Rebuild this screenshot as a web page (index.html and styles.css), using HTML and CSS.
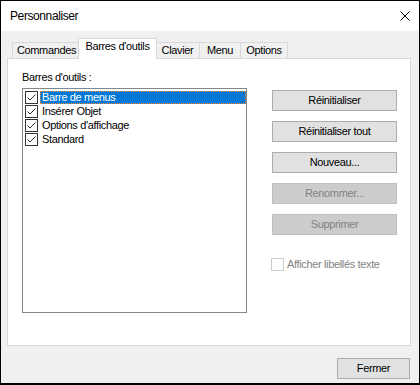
FILE: index.html
```html
<!DOCTYPE html>
<html lang="fr">
<head>
<meta charset="utf-8">
<title>Personnaliser</title>
<link rel="stylesheet" href="styles.css">
</head>
<body>
<div class="window">
  <div class="titlebar">
    <span class="title">Personnaliser</span>
    <svg class="close" width="10" height="10" viewBox="0 0 10 10"><path d="M0.5 0.5 L9.5 9.5 M9.5 0.5 L0.5 9.5" stroke="#000" stroke-width="1" fill="none"/></svg>
  </div>
  <div class="tabs">
    <div class="tab tab-cmd">Commandes</div>
    <div class="tab tab-bar active">Barres d'outils</div>
    <div class="tab tab-clav">Clavier</div>
    <div class="tab tab-menu">Menu</div>
    <div class="tab tab-opt last">Options</div>
  </div>
  <div class="panel">
    <div class="leftcol">
      <div class="label">Barres d'outils :</div>
      <div class="listbox">
        <div class="item selected">
          <svg class="cb" width="13" height="13" viewBox="0 0 13 13"><rect x="0.5" y="0.5" width="12" height="12" fill="#fff" stroke="#333"/><path d="M2.5 6.5 L5 9 L10.5 3.5" stroke="#333" fill="none"/></svg>
          <span class="txt">Barre de menus</span>
        </div>
        <div class="item">
          <svg class="cb" width="13" height="13" viewBox="0 0 13 13"><rect x="0.5" y="0.5" width="12" height="12" fill="#fff" stroke="#333"/><path d="M2.5 6.5 L5 9 L10.5 3.5" stroke="#333" fill="none"/></svg>
          <span class="txt">Insérer Objet</span>
        </div>
        <div class="item">
          <svg class="cb" width="13" height="13" viewBox="0 0 13 13"><rect x="0.5" y="0.5" width="12" height="12" fill="#fff" stroke="#333"/><path d="M2.5 6.5 L5 9 L10.5 3.5" stroke="#333" fill="none"/></svg>
          <span class="txt">Options d'affichage</span>
        </div>
        <div class="item">
          <svg class="cb" width="13" height="13" viewBox="0 0 13 13"><rect x="0.5" y="0.5" width="12" height="12" fill="#fff" stroke="#333"/><path d="M2.5 6.5 L5 9 L10.5 3.5" stroke="#333" fill="none"/></svg>
          <span class="txt">Standard</span>
        </div>
      </div>
    </div>
    <div class="rightcol">
      <div class="btn">Réinitialiser</div>
      <div class="btn">Réinitialiser tout</div>
      <div class="btn">Nouveau...</div>
      <div class="btn disabled">Renommer...</div>
      <div class="btn disabled">Supprimer</div>
      <div class="check disabled">
        <span class="box"></span>
        <span class="ctext">Afficher libellés texte</span>
      </div>
    </div>
  </div>
  <div class="footer">
    <div class="btn btn-close">Fermer</div>
  </div>
</div>
</body>
</html>
```
FILE: styles.css
```css
* { box-sizing: border-box; }
html, body { margin: 0; padding: 0; }
body {
  background: #000;
  width: 420px;
  height: 385px;
  overflow: hidden;
  font-family: "Liberation Sans", Arial, sans-serif;
  font-size: 11px;
  letter-spacing: -0.35px;
  color: #000;
}
.window {
  width: 420px;
  height: 384px;
  border: 1px solid #000;
  background: #f0f0f0;
  display: flex;
  flex-direction: column;
}
.titlebar {
  height: 30px;
  flex: none;
  background: #fff;
  display: flex;
  align-items: center;
  padding: 0 9px 0 9px;
}
.title {
  font-size: 12px;
  line-height: 14px;
  letter-spacing: -0.4px;
}
.close {
  margin-left: auto;
  display: block;
}
.tabs {
  flex: none;
  display: flex;
  align-items: flex-end;
  height: 20px;
  margin-top: 7px;
  padding-left: 11px;
}
.tab {
  height: 16px;
  border-top: 1px solid #d9d9d9;
  border-left: 1px solid #d9d9d9;
  background: #f0f0f0;
  text-align: center;
  line-height: 13px;
  padding-top: 1px;
  white-space: nowrap;
}
.tab.last { border-right: 1px solid #d9d9d9; }
.tab-cmd { width: 68px; }
.tab-bar { width: 75px; }
.tab-clav { width: 44px; }
.tab-menu { width: 41px; }
.tab-opt { width: 48px; }
.tab.active {
  width: 79px;
  height: 21px;
  margin: 0 -2px -1px -2px;
  background: #fff;
  border-right: 1px solid #d9d9d9;
  position: relative;
  z-index: 1;
}
.panel {
  flex: none;
  width: 404px;
  height: 288px;
  margin-left: 6px;
  border: 1px solid #d9d9d9;
  background: #fff;
  display: flex;
  padding: 12px 0 0 14px;
}
.leftcol {
  display: flex;
  flex-direction: column;
}
.label {
  line-height: 13px;
  margin-bottom: 4px;
}
.listbox {
  width: 225px;
  height: 225px;
  border: 1px solid #828790;
  background: #fff;
  padding-top: 1px;
}
.item {
  display: flex;
  align-items: center;
  height: 14px;
}
.cb {
  display: block;
  flex: none;
  margin-left: 2px;
}
.txt {
  flex: 1;
  margin-left: 2px;
  height: 13px;
  line-height: 11px;
  padding-left: 1px;
  border: 1px solid transparent;
  white-space: nowrap;
}
.item.selected .txt {
  background: #0078d7;
  color: #fff;
  border: 1px dotted #ff8a28;
}
.rightcol {
  margin-left: 25px;
  padding-top: 19px;
  display: flex;
  flex-direction: column;
  gap: 10px;
}
.btn {
  width: 125px;
  height: 21px;
  border: 1px solid #adadad;
  background: #e1e1e1;
  display: flex;
  align-items: center;
  justify-content: center;
  line-height: 13px;
  white-space: nowrap;
}
.btn.disabled {
  background: #cccccc;
  border-color: #bfbfbf;
  color: #838383;
}
.check {
  margin-top: 13px;
  margin-left: -1px;
  display: flex;
  align-items: center;
  line-height: 13px;
}
.check .box {
  width: 13px;
  height: 13px;
  border: 1px solid #cccccc;
  background: #fff;
  flex: none;
}
.check .ctext {
  margin-left: 3px;
  color: #838383;
}
.footer {
  flex: none;
  display: flex;
  justify-content: flex-end;
  margin-top: 12px;
  padding-right: 9px;
}
.btn-close {
  width: 73px;
}
```
